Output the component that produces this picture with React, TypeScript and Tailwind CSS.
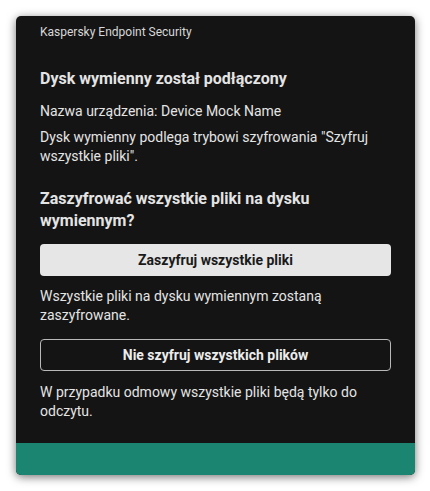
import React from "react";

export default function App() {
  return (
    <div
      className="w-[430px] h-[491px] bg-white pl-[16px] pt-[16px]"
      style={{ fontFamily: "Roboto, 'Noto Sans', sans-serif" }}
    >
      <div className="w-[399px] h-[459px] rounded-[5px] bg-[#141414] shadow-[0_2px_10px_rgba(0,0,0,0.55)] flex flex-col overflow-hidden">
        <div className="flex-1 px-6 text-[#e4e4e4]">
          <div className="pt-[8px] text-[12px] leading-[16px] text-[#d8d8d8]">
            Kaspersky Endpoint Security
          </div>
          <div className="mt-[27px] text-[16px] leading-[24px] font-bold">
            Dysk wymienny został podłączony
          </div>
          <div className="mt-[11px] text-[14px] leading-[19px]">
            Nazwa urządzenia: Device Mock Name
          </div>
          <div className="mt-[7px] text-[14px] leading-[19px]">
            Dysk wymienny podlega trybowi szyfrowania "Szyfruj wszystkie pliki".
          </div>
          <div className="mt-[22px] text-[16px] leading-[22px] font-bold">
            Zaszyfrować wszystkie pliki na dysku wymiennym?
          </div>
          <button className="mt-[12px] w-full h-[32px] rounded-[4px] bg-[#e6e6e6] text-[#1a1a1a] text-[14px] font-bold">
            Zaszyfruj wszystkie pliki
          </button>
          <div className="mt-[11px] text-[14px] leading-[19px]">
            Wszystkie pliki na dysku wymiennym zostaną zaszyfrowane.
          </div>
          <button className="mt-[14px] w-full h-[32px] rounded-[4px] border border-[#b8b8b8] text-[#ececec] text-[14px] font-bold">
            Nie szyfruj wszystkich plików
          </button>
          <div className="mt-[12px] text-[14px] leading-[19px]">
            W przypadku odmowy wszystkie pliki będą tylko do odczytu.
          </div>
        </div>
        <div className="h-[32px] bg-[#1b8571]" />
      </div>
    </div>
  );
}
